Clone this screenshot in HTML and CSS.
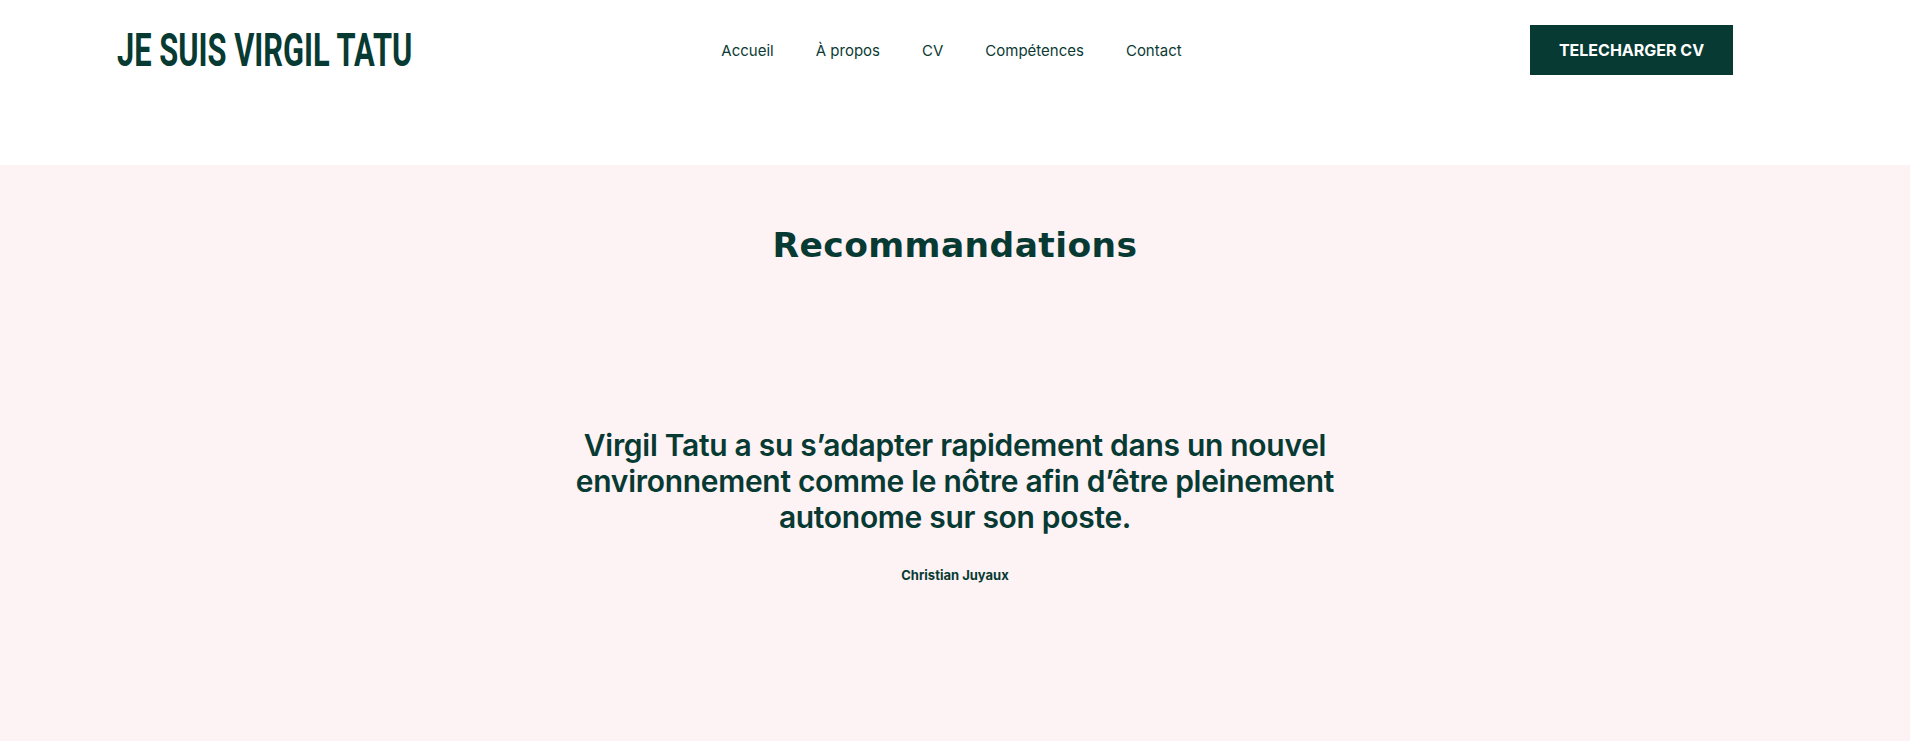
FILE: index.html
```html
<!DOCTYPE html>
<html lang="fr">
<head>
<meta charset="utf-8">
<title>Je suis Virgil Tatu</title>
<link rel="stylesheet" href="styles.css">
</head>
<body>
<header class="site-header">
  <div class="brand"><span class="brand-text">JE SUIS VIRGIL TATU</span></div>
  <nav class="main-nav">
    <a href="#">Accueil</a>
    <a href="#">À propos</a>
    <a href="#">CV</a>
    <a href="#">Compétences</a>
    <a href="#">Contact</a>
  </nav>
  <div class="cta-wrap"><a class="cta" href="#">TELECHARGER CV</a></div>
</header>
<section class="reco">
  <h2 class="reco-title">Recommandations</h2>
  <blockquote class="quote">
    <p class="quote-text">Virgil Tatu a su s’adapter rapidement dans un nouvel environnement comme le nôtre afin d’être pleinement autonome sur son poste.</p>
    <p class="quote-author">Christian Juyaux</p>
  </blockquote>
</section>
</body>
</html>
```
FILE: styles.css
```css
* { box-sizing: border-box; }
html, body { margin: 0; padding: 0; }
body {
  font-family: Inter, "Noto Sans", sans-serif;
  color: #073a32;
  background: #ffffff;
  overflow: hidden;
}
.site-header {
  height: 165px;
  display: grid;
  grid-template-columns: 1fr auto 1fr;
  align-items: start;
  padding: 25px 124px 0 117px;
}
.brand {
  height: 50px;
  display: flex;
  align-items: center;
}
.brand-text {
  display: inline-block;
  font-family: Roboto, "Liberation Sans", sans-serif;
  font-weight: 700;
  font-size: 46px;
  line-height: 1;
  color: #073a32;
  transform: scaleX(0.67);
  transform-origin: left center;
  white-space: nowrap;
}
.main-nav {
  height: 50px;
  display: flex;
  align-items: center;
  gap: 42px;
}
.main-nav a {
  font-size: 15px;
  color: #0b3a34;
  text-decoration: none;
}
.cta-wrap {
  display: flex;
  justify-content: flex-end;
  padding-right: 53px;
}
.cta {
  display: flex;
  align-items: center;
  justify-content: center;
  width: 203px;
  height: 50px;
  background: #063a32;
  color: #ffffff;
  font-weight: 700;
  font-size: 16px;
  text-decoration: none;
}
.reco {
  background: #fdf2f4;
  height: 576px;
  padding-top: 58px;
  display: flex;
  flex-direction: column;
  align-items: center;
}
.reco-title {
  margin: 0;
  font-family: "DejaVu Sans", sans-serif;
  font-weight: 700;
  font-size: 34.5px;
  line-height: 44px;
  letter-spacing: 0.4px;
  color: #073a32;
}
.quote {
  margin: 160px 0 0 0;
  width: 830px;
  text-align: center;
}
.quote-text {
  margin: 0;
  font-size: 30px;
  font-weight: 600;
  line-height: 36px;
  letter-spacing: -0.3px;
  color: #073a32;
}
.quote-author {
  margin: 32px 0 0 0;
  font-size: 13px;
  font-weight: 700;
  color: #073a32;
}
```
